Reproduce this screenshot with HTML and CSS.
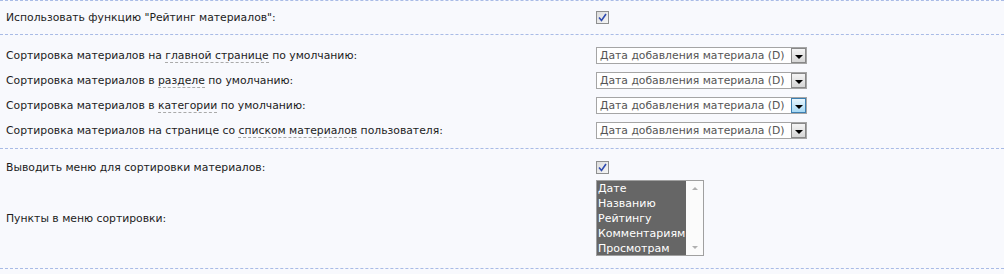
FILE: index.html
```html
<!DOCTYPE html>
<html lang="ru">
<head>
    <meta charset="UTF-8">
    <title>Настройки материалов</title>
    <link rel="stylesheet" href="styles.css">
</head>
<body>

    <!-- Рейтинг -->
    <div class="group group-first">
        <div class="row">
            <div class="label">Использовать функцию "Рейтинг материалов":</div>
            <div class="value">
                <span class="check">
                    <svg width="9" height="9" viewBox="0 0 9 9"><path d="M1 4.5 L3.5 7.5 L8 1" fill="none" stroke="#2f4bb0" stroke-width="1.6"/></svg>
                </span>
            </div>
        </div>
    </div>

    <!-- Сортировка -->
    <div class="group group-sort">
        <div class="row">
            <div class="label">Сортировка материалов на <span class="hint">главной странице</span> по умолчанию:</div>
            <div class="value">
                <span class="select"><span class="select-text">Дата добавления материала (D)</span><span class="select-btn"><i class="arrow"></i></span></span>
            </div>
        </div>
        <div class="row">
            <div class="label">Сортировка материалов в <span class="hint">разделе</span> по умолчанию:</div>
            <div class="value">
                <span class="select"><span class="select-text">Дата добавления материала (D)</span><span class="select-btn"><i class="arrow"></i></span></span>
            </div>
        </div>
        <div class="row">
            <div class="label">Сортировка материалов в <span class="hint">категории</span> по умолчанию:</div>
            <div class="value">
                <span class="select"><span class="select-text">Дата добавления материала (D)</span><span class="select-btn hover"><i class="arrow"></i></span></span>
            </div>
        </div>
        <div class="row">
            <div class="label">Сортировка материалов на странице со <span class="hint">списком материалов</span> пользователя:</div>
            <div class="value">
                <span class="select"><span class="select-text">Дата добавления материала (D)</span><span class="select-btn"><i class="arrow"></i></span></span>
            </div>
        </div>
    </div>

    <!-- Меню сортировки -->
    <div class="group group-menu">
        <div class="row">
            <div class="label">Выводить меню для сортировки материалов:</div>
            <div class="value">
                <span class="check">
                    <svg width="9" height="9" viewBox="0 0 9 9"><path d="M1 4.5 L3.5 7.5 L8 1" fill="none" stroke="#2f4bb0" stroke-width="1.6"/></svg>
                </span>
            </div>
        </div>
        <div class="row row-list">
            <div class="label">Пункты в меню сортировки:</div>
            <div class="value">
                <div class="listbox">
                    <ul class="options">
                        <li>Дате</li>
                        <li>Названию</li>
                        <li>Рейтингу</li>
                        <li>Комментариям</li>
                        <li>Просмотрам</li>
                    </ul>
                    <div class="scroll">
                        <i class="up"></i>
                        <i class="down"></i>
                    </div>
                </div>
            </div>
        </div>
    </div>

</body>
</html>
```

FILE: styles.css
```css
body {
    margin: 0;
    padding: 0;
    background-color: #f8f9fd;
    font-family: "DejaVu Sans", Verdana, sans-serif;
    font-size: 10.8px;
    color: #1c1c1c;
}

.group {
    border-bottom: 1px dashed #a9bbe6;
}

.group-first {
    border-top: 1px dashed #a9bbe6;
    padding: 4px 0;
}

.group-sort {
    padding: 8px 0 5px;
}

.group-menu {
    padding: 6px 0 6px;
}

.row {
    display: grid;
    grid-template-columns: 596px 1fr;
    align-items: center;
    min-height: 25px;
}

.row-list {
    padding: 0 0 6px;
}

.label {
    padding-left: 6px;
}

.hint {
    border-bottom: 1px dashed #aaa;
}

/* checkbox */
.check {
    display: flex;
    align-items: center;
    justify-content: center;
    width: 11px;
    height: 11px;
    border: 1px solid #8e8f8f;
    background: linear-gradient(135deg, #dcdcdc, #f6f6f6);
}

/* dropdown */
.select {
    display: flex;
    width: 209px;
    height: 15px;
    border: 1px solid #a5a5a5;
    background-color: #fff;
}

.select-text {
    flex: 1;
    padding-left: 3px;
    line-height: 15px;
    color: #555;
    white-space: nowrap;
    overflow: hidden;
}

.select-btn {
    display: flex;
    align-items: center;
    justify-content: center;
    width: 13px;
    border: 1px solid #888;
    background: linear-gradient(#f4f4f4, #d6d6d6);
}

.select-btn.hover {
    border-color: #3c7fb1;
    background: linear-gradient(#e8f6fd, #a7d9f5);
}

.arrow {
    width: 0;
    height: 0;
    border-left: 4px solid transparent;
    border-right: 4px solid transparent;
    border-top: 4px solid #000;
    margin-top: 2px;
}

/* list */
.listbox {
    display: flex;
    width: 106px;
    height: 74px;
    border: 1px solid #a0a0a0;
    background-color: #fff;
}

.options {
    flex: 1;
    list-style: none;
    margin: 0;
    padding: 0;
    background-color: #666;
    color: #fff;
    font-size: 11px;
}

.options li {
    height: 15px;
    line-height: 15px;
    padding-left: 1px;
    white-space: nowrap;
}

.scroll {
    width: 17px;
    display: flex;
    flex-direction: column;
    justify-content: space-between;
    align-items: center;
    padding: 6px 0;
    background-color: #fbfbfb;
}

.scroll .up,
.scroll .down {
    width: 0;
    height: 0;
    border-left: 3px solid transparent;
    border-right: 3px solid transparent;
}

.scroll .up {
    border-bottom: 3px solid #b0b0b0;
}

.scroll .down {
    border-top: 3px solid #b0b0b0;
}
```
